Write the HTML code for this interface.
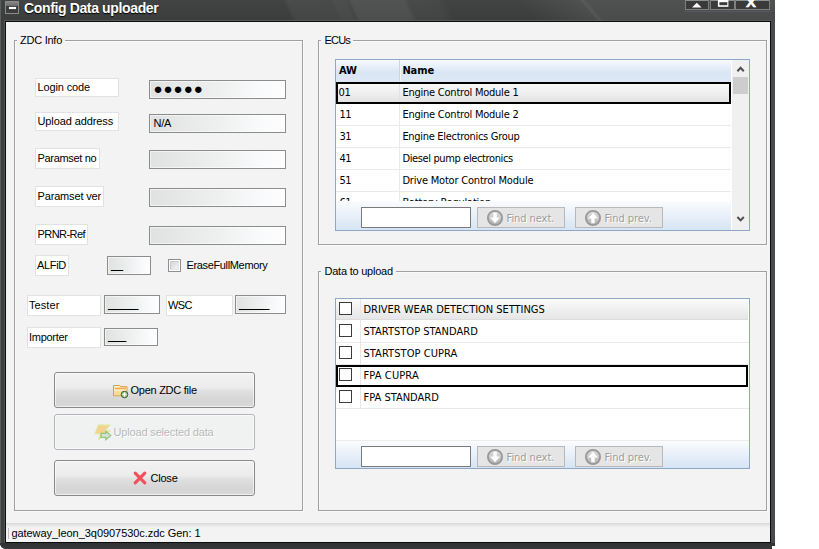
<!DOCTYPE html>
<html>
<head>
<meta charset="utf-8">
<title>Config Data uploader</title>
<style>
html,body{margin:0;padding:0;background:#fff;}
body{width:819px;height:549px;overflow:hidden;position:relative;font-family:"Liberation Sans",sans-serif;font-size:11px;color:#000;}
.abs{position:absolute;box-sizing:border-box;}
.t{line-height:12px;white-space:nowrap;}
#win{left:0;top:0;width:775px;height:549px;background:#3f4140;border-bottom-left-radius:6px;overflow:hidden;}
#titlebar{left:0;top:0;width:775px;height:21px;background:linear-gradient(#424443,#3b3d3c);overflow:hidden;}
#sheen{left:0;top:0;width:800px;height:21px;transform-origin:0 0;transform:skewX(24deg);background:linear-gradient(90deg,
 rgba(255,255,255,0) 283px, rgba(255,255,255,0.045) 287px, rgba(255,255,255,0.04) 330px, rgba(255,255,255,0.06) 334px, rgba(255,255,255,0.06) 345px, rgba(255,255,255,0.03) 347px, rgba(255,255,255,0.085) 351px, rgba(255,255,255,0.085) 403px, rgba(255,255,255,0.04) 408px, rgba(255,255,255,0.03) 436px, rgba(255,255,255,0.0) 446px, rgba(255,255,255,0.0) 800px);}
#sheen2{left:0;top:0;width:800px;height:21px;transform-origin:0 0;transform:skewX(41deg);background:linear-gradient(90deg,
 rgba(255,255,255,0.0) 515px, rgba(255,255,255,0.07) 579px, rgba(255,255,255,0.13) 582px, rgba(255,255,255,0.075) 586px, rgba(255,255,255,0.075) 800px);}
#title{left:24px;top:-1px;letter-spacing:-0.36px;font-weight:bold;font-size:14px;color:#fff;line-height:18px;white-space:nowrap;text-shadow:0 1px 1px #000;}
#sysicon{left:5px;top:1px;width:14px;height:13px;border:1px solid #8a8a8a;background:linear-gradient(#858585,#6e6e6e 32%,#3a3a3a 34%,#3e3e3e);}
#sysicon i{position:absolute;left:3px;top:5px;width:7px;height:2px;background:#fff;box-shadow:0 0 1px #ccd;}
.tbtn{top:-2px;height:12px;border:1px solid #7e807f;background:linear-gradient(#8b918b 0,#8b918b 2px,#3a3a3a 2px,#3a3a3a);}
#client{left:6px;top:22px;width:764px;height:520px;background:#f3f3f3;}
.grp{border:1px solid #a0a0a0;box-shadow:1px 1px 0 #fafafa, inset 1px 1px 0 #fafafa;}
.lbl{background:#fff;border:1px solid #e2e2e2;}
.inp{border:1px solid #8c8c8c;background:linear-gradient(90deg,#e0e1e1,#eeefef 50%,#fafbfc 85%,#fdfdfd);box-shadow:inset 0 0 0 1px rgba(255,255,255,0.55);}
.btn{border:1px solid #898989;border-radius:3px;background:linear-gradient(#f2f2f2,#ececec 42%,#dedede 56%,#d5d5d5 82%,#d9d9d9);box-shadow:inset 0 0 0 1px rgba(255,255,255,0.6);}
.tah{font-family:"DejaVu Sans Condensed","DejaVu Sans","Liberation Sans",sans-serif;font-size:11px;}
.grid{border:1px solid #8ea6c4;background:#fff;overflow:hidden;}
.row{left:0;height:22px;border-bottom:1px solid #ececec;}
.findbar{background:linear-gradient(#fbfcfe,#d6e4f4);}
.fbox{border:1px solid #7a7a7a;background:#fff;}
.fbtn{border:1px solid #b8b8b8;background:#e5e5e5;color:#a9a9a9;text-shadow:1px 1px 0 #fff;}
.cb{width:13px;height:13px;border:1px solid #3c3c3c;background:#fff;}
</style>
</head>
<body>
<div id="win" class="abs">
  <div id="titlebar" class="abs"><div id="sheen" class="abs"></div><div id="sheen2" class="abs"></div></div>
  <div class="abs" style="left:0;top:0;width:1px;height:552px;background:#59605c;"></div>
  <div id="sysicon" class="abs"><i></i></div>
  <div id="title" class="abs">Config Data uploader</div>
  <div class="abs tbtn" style="left:685px;width:24px;"></div>
  <div class="abs tbtn" style="left:710px;width:25px;"></div>
  <div class="abs tbtn" style="left:735px;width:35px;"></div>
  <svg class="abs" style="left:685px;top:0;" width="86" height="12" viewBox="0 0 86 12">
    <path d="M7 7.4 L11.8 2.8 L16.6 7.4 Z" fill="#fff"/>
    <rect x="32.9" y="-2" width="10.5" height="8.8" fill="#fff"/>
    <rect x="34.4" y="2.2" width="7.9" height="3" fill="#3a3a3a"/>
    <rect x="0" y="11" width="86" height="1" fill="#6a7088" opacity="0.35"/>
  </svg>
  <div class="abs" style="left:746.2px;top:-4px;font-weight:bold;font-size:13px;line-height:13px;color:#fff;-webkit-text-stroke:0.5px #fff;transform-origin:0 0;transform:scaleX(1.14);">X</div>
  <div class="abs" style="left:771px;top:12px;width:4px;height:540px;background:#484a4b;"></div>
  <div class="abs" style="left:4px;top:20px;width:767px;height:1px;background:#555957;"></div>
  <div class="abs" style="left:4px;top:20px;width:1px;height:524px;background:#4f5351;"></div>
  <div class="abs" style="left:5px;top:21px;width:766px;height:522px;background:#0c0c0c;"></div>
  <div id="client" class="abs"></div>
  <div class="abs" style="left:0;top:543px;width:775px;height:9px;background:linear-gradient(#2f3132,#3a3c3d);"></div>
</div>
<div class="abs" style="left:772px;top:546px;width:6px;height:6px;background:#fff;transform:rotate(0deg);"></div>
<div class="abs grp" style="left:14px;top:40px;width:289px;height:471px;"></div>
<div class="abs" style="left:17px;top:34px;width:48px;height:14px;background:#f3f3f3;"></div>
<div class="abs t " style="left:20px;top:34px;letter-spacing:-0.25px;">ZDC Info</div>
<div class="abs lbl" style="left:35px;top:78px;width:84px;height:19px;"></div>
<div class="abs t " style="left:37.5px;top:81px;letter-spacing:-0.13px;">Login code</div>
<div class="abs inp" style="left:149px;top:80px;width:137px;height:19px;"></div>
<div class="abs t" style="left:153.5px;top:79px;line-height:19px;font-size:15px;letter-spacing:1px;">●●●●●</div>
<div class="abs lbl" style="left:35px;top:112px;width:84px;height:19px;"></div>
<div class="abs t " style="left:37.5px;top:115px;letter-spacing:-0.10px;">Upload address</div>
<div class="abs inp" style="left:149px;top:114px;width:137px;height:19px;"></div>
<div class="abs t " style="left:153.5px;top:117px;letter-spacing:-0.23px;">N/A</div>
<div class="abs lbl" style="left:35px;top:148px;width:65px;height:21px;"></div>
<div class="abs t " style="left:37.5px;top:152px;letter-spacing:-0.33px;">Paramset no</div>
<div class="abs inp" style="left:149px;top:150px;width:137px;height:19px;"></div>
<div class="abs lbl" style="left:35px;top:186px;width:69px;height:21px;"></div>
<div class="abs t " style="left:37.5px;top:190px;letter-spacing:-0.16px;">Paramset ver</div>
<div class="abs inp" style="left:149px;top:188px;width:137px;height:19px;"></div>
<div class="abs lbl" style="left:35px;top:224px;width:53px;height:21px;"></div>
<div class="abs t " style="left:37.5px;top:228px;letter-spacing:-0.55px;">PRNR-Ref</div>
<div class="abs inp" style="left:149px;top:226px;width:137px;height:19px;"></div>
<div class="abs lbl" style="left:35px;top:255px;width:34px;height:21px;"></div>
<div class="abs t " style="left:37px;top:259px;letter-spacing:-0.32px;">ALFiD</div>
<div class="abs inp" style="left:107px;top:256px;width:44px;height:19px;"></div>
<div class="abs t " style="left:111px;top:259px;">__</div>
<div class="abs" style="left:111px;top:270px;width:12px;height:1px;background:#000;"></div>
<div class="abs" style="left:168px;top:259px;width:13px;height:13px;border:1px solid #8e8f8f;background:#fff;"></div>
<div class="abs" style="left:170px;top:261px;width:9px;height:9px;border:1px solid #c9cbd1;border-right-color:#e2e3e6;border-bottom-color:#e2e3e6;background:linear-gradient(135deg,#d6d6d6,#f4f4f4);"></div>
<div class="abs t " style="left:186.5px;top:259px;letter-spacing:-0.35px;">EraseFullMemory</div>
<div class="abs lbl" style="left:27px;top:295px;width:74px;height:21px;"></div>
<div class="abs t " style="left:29px;top:299px;letter-spacing:0.08px;">Tester</div>
<div class="abs inp" style="left:104px;top:295px;width:56px;height:19px;"></div>
<div class="abs t " style="left:108px;top:298px;">_____</div>
<div class="abs" style="left:108px;top:309px;width:30px;height:1px;background:#000;"></div>
<div class="abs lbl" style="left:166px;top:295px;width:67px;height:21px;"></div>
<div class="abs t " style="left:168px;top:299px;letter-spacing:-0.60px;">WSC</div>
<div class="abs inp" style="left:235px;top:295px;width:51px;height:19px;"></div>
<div class="abs t " style="left:239px;top:298px;">_____</div>
<div class="abs" style="left:239px;top:309px;width:30px;height:1px;background:#000;"></div>
<div class="abs lbl" style="left:27px;top:327px;width:74px;height:21px;"></div>
<div class="abs t " style="left:29px;top:331px;letter-spacing:-0.28px;">Importer</div>
<div class="abs inp" style="left:104px;top:328px;width:54px;height:18px;"></div>
<div class="abs t " style="left:108px;top:330px;">___</div>
<div class="abs" style="left:108px;top:341px;width:18px;height:1px;background:#000;"></div>
<div class="abs btn" style="left:54px;top:372px;width:201px;height:36px;"></div>
<svg class="abs" style="left:112px;top:384px;" width="18" height="16" viewBox="0 0 18 16"><path d="M1.5 1.5 h6 l1 1.2 h6.5 v9 h-13.5 z" fill="#fff4d8" stroke="#e29a3c" stroke-width="1"/><rect x="2.6" y="3.6" width="11.6" height="1.7" fill="#f4ad48"/><rect x="2.2" y="6.6" width="12.2" height="4.6" fill="#fbdc98"/><circle cx="12.5" cy="10.5" r="3.3" fill="#94c476" stroke="#4a5c48" stroke-width="1"/><path d="M12.5 8.6 v3.8 M10.6 10.5 h3.8" stroke="#fff" stroke-width="1.3"/></svg>
<div class="abs t " style="left:130.5px;top:384px;letter-spacing:-0.26px;">Open ZDC file</div>
<div class="abs btn" style="left:54px;top:414px;width:201px;height:36px;border-color:#b4b4bc;background:#f0f1f1;"></div>
<svg class="abs" style="left:94px;top:424px;opacity:0.7" width="18" height="17" viewBox="0 0 18 17"><path d="M4.5 1.2 L15.5 1.2 L11 7 L15.5 7 L4.5 15.5 L7.2 9.6 L1.2 9.6 Z" fill="#f7c566" stroke="#dde072" stroke-width="1.2"/><path d="M7 9.4 h4.8 v-2.2 l5 4.2 l-5 4.2 v-2.2 h-4.8 z" fill="#cfd8c8" stroke="#6fb44e" stroke-width="1.2"/></svg>
<div class="abs t " style="left:113.6px;top:426px;letter-spacing:-0.17px;color:#b9b9b9;text-shadow:1px 1px 0 #fff;">Upload selected data</div>
<div class="abs btn" style="left:54px;top:460px;width:201px;height:36px;"></div>
<svg class="abs" style="left:133px;top:471px;" width="14" height="14" viewBox="0 0 14 14"><path d="M2.2 2.2 L11.8 11.8 M11.8 2.2 L2.2 11.8" stroke="#f24f5a" stroke-width="3.1" stroke-linecap="round"/></svg>
<div class="abs t " style="left:150.5px;top:471.5px;letter-spacing:-0.22px;">Close</div>
<div class="abs grp" style="left:318px;top:40px;width:449px;height:205px;"></div>
<div class="abs" style="left:321px;top:34px;width:32px;height:14px;background:#f3f3f3;"></div>
<div class="abs t " style="left:324.5px;top:34px;letter-spacing:-0.80px;">ECUs</div>
<!-- ECU grid -->
<div class="abs" style="left:335px;top:59px;width:415px;height:172px;border:1px solid #8fa7c6;background:#fff;"></div>
<div class="abs" style="left:336px;top:60px;width:395px;height:22px;background:linear-gradient(#f7f9fd,#e3ecf8 40%,#dbe6f4 55%,#dde8f5);"></div>
<div class="abs" style="left:399px;top:60px;width:1px;height:21px;background:#c9d4e3;"></div>
<div class="abs" style="left:400px;top:60px;width:1px;height:21px;background:#f4f8fd;"></div>
<div class="abs t tah" style="left:339px;top:64px;line-height:13px;letter-spacing:-0.15px;font-weight:bold;">AW</div>
<div class="abs t tah" style="left:402.4px;top:64px;line-height:13px;letter-spacing:-0.05px;font-weight:bold;">Name</div>
<div class="abs" style="left:336px;top:125px;width:395px;height:1px;background:#ebe9e9;"></div>
<div class="abs" style="left:336px;top:147px;width:395px;height:1px;background:#ebe9e9;"></div>
<div class="abs" style="left:336px;top:169px;width:395px;height:1px;background:#ebe9e9;"></div>
<div class="abs" style="left:336px;top:191px;width:395px;height:1px;background:#ebe9e9;"></div>
<div class="abs" style="left:399px;top:104px;width:1px;height:97px;background:#ebe9e9;"></div>
<div class="abs" style="left:336px;top:82px;width:395px;height:22px;border:2px solid #000;background:linear-gradient(#f8f8f8,#efefef 50%,#e2e2e2);"></div>
<div class="abs" style="left:399px;top:84px;width:1px;height:18px;background:#e2e2e2;"></div>
<div class="abs t tah" style="left:338.5px;top:86px;line-height:13px;letter-spacing:-0.40px;">01</div>
<div class="abs t tah" style="left:402.4px;top:86px;line-height:13px;letter-spacing:-0.23px;">Engine Control Module 1</div>
<div class="abs t tah" style="left:339.4px;top:108px;line-height:13px;letter-spacing:-0.40px;">11</div>
<div class="abs t tah" style="left:402.4px;top:108px;line-height:13px;letter-spacing:-0.23px;">Engine Control Module 2</div>
<div class="abs t tah" style="left:339.4px;top:130px;line-height:13px;letter-spacing:-0.40px;">31</div>
<div class="abs t tah" style="left:402.4px;top:130px;line-height:13px;letter-spacing:-0.30px;">Engine Electronics Group</div>
<div class="abs t tah" style="left:339.4px;top:152px;line-height:13px;letter-spacing:-0.40px;">41</div>
<div class="abs t tah" style="left:402.4px;top:152px;line-height:13px;letter-spacing:-0.37px;">Diesel pump electronics</div>
<div class="abs t tah" style="left:339.4px;top:174px;line-height:13px;letter-spacing:-0.40px;">51</div>
<div class="abs t tah" style="left:402.4px;top:174px;line-height:13px;letter-spacing:-0.20px;">Drive Motor Control Module</div>
<div class="abs t tah" style="left:339.4px;top:196px;line-height:13px;letter-spacing:-0.40px;">61</div>
<div class="abs t tah" style="left:402.4px;top:196px;line-height:13px;letter-spacing:-0.22px;">Battery Regulation</div>
<div class="abs findbar" style="left:336px;top:201px;width:396px;height:29px;"></div>
<div class="abs" style="left:731px;top:60px;width:1px;height:170px;background:#fff;"></div>
<div class="abs" style="left:732px;top:60px;width:17px;height:170px;background:#f0f0f0;"></div>
<div class="abs" style="left:733px;top:77px;width:15px;height:17px;background:#cdcdcd;"></div>
<svg class="abs" style="left:732px;top:60px;" width="17" height="170" viewBox="0 0 17 170"><path d="M5.4 11.2 L8.6 7.8 L11.8 11.2" fill="none" stroke="#4e4e4e" stroke-width="2"/><path d="M5.4 157 L8.6 160.4 L11.8 157" fill="none" stroke="#4e4e4e" stroke-width="2"/></svg>
<div class="abs fbox" style="left:361px;top:207px;width:110px;height:21px;"></div>
<div class="abs fbtn" style="left:477px;top:207px;width:88px;height:21px;"></div>
<svg class="abs" style="left:487px;top:210px;" width="16" height="16" viewBox="0 0 16 16"><defs><linearGradient id="g477207" x1="0" y1="0" x2="0" y2="1"><stop offset="0" stop-color="#dedede"/><stop offset="1" stop-color="#b2b2b2"/></linearGradient></defs><circle cx="8" cy="8" r="7.1" fill="url(#g477207)" stroke="#989898" stroke-width="1.8"/><path d="M6.3 2.8 V7.6 H3 L8 13.2 L13 7.6 H9.7 V2.8 Z" fill="#fff"/></svg>
<div class="abs t tah" style="left:506.6px;top:212px;line-height:13px;letter-spacing:-0.07px;color:#9e9e9e;text-shadow:1px 1px 0 #fff;">Find next.</div>
<div class="abs fbtn" style="left:575px;top:207px;width:88px;height:21px;"></div>
<svg class="abs" style="left:585px;top:210px;" width="16" height="16" viewBox="0 0 16 16"><defs><linearGradient id="g575207" x1="0" y1="0" x2="0" y2="1"><stop offset="0" stop-color="#dedede"/><stop offset="1" stop-color="#b2b2b2"/></linearGradient></defs><circle cx="8" cy="8" r="7.1" fill="url(#g575207)" stroke="#989898" stroke-width="1.8"/><path d="M6.3 13.2 V8.4 H3 L8 2.8 L13 8.4 H9.7 V13.2 Z" fill="#fff"/></svg>
<div class="abs t tah" style="left:604.6px;top:212px;line-height:13px;letter-spacing:-0.04px;color:#9e9e9e;text-shadow:1px 1px 0 #fff;">Find prev.</div>

<div class="abs grp" style="left:318px;top:271px;width:449px;height:240px;"></div>
<div class="abs" style="left:321px;top:265px;width:75px;height:14px;background:#f3f3f3;"></div>
<div class="abs t " style="left:324.5px;top:265px;letter-spacing:-0.23px;">Data to upload</div>
<!-- Data grid -->
<div class="abs" style="left:335px;top:298px;width:415px;height:171px;border:1px solid #8fa7c6;background:#fff;"></div>
<div class="abs" style="left:336px;top:299px;width:412px;height:21px;background:linear-gradient(#fbfbfb,#f0f0f0 50%,#e6e6e6);border-bottom:1px solid #dcdcdc;"></div>
<div class="abs" style="left:336px;top:342px;width:413px;height:1px;background:#ebe9e9;"></div>
<div class="abs" style="left:336px;top:364px;width:413px;height:1px;background:#ebe9e9;"></div>
<div class="abs" style="left:336px;top:408px;width:413px;height:1px;background:#ebe9e9;"></div>
<div class="abs" style="left:360px;top:299px;width:1px;height:109px;background:#e6e6e6;"></div>
<div class="abs" style="left:336px;top:365px;width:412px;height:22px;border:2px solid #000;background:#fff;"></div>
<div class="abs" style="left:360px;top:367px;width:1px;height:18px;background:#e6e6e6;"></div>
<div class="abs cb" style="left:339px;top:302px;"></div>
<div class="abs t tah" style="left:363.5px;top:303px;line-height:13px;letter-spacing:-0.04px;">DRIVER WEAR DETECTION SETTINGS</div>
<div class="abs cb" style="left:339px;top:324px;"></div>
<div class="abs t tah" style="left:363.5px;top:325px;line-height:13px;letter-spacing:0.02px;">STARTSTOP STANDARD</div>
<div class="abs cb" style="left:339px;top:346px;"></div>
<div class="abs t tah" style="left:363.5px;top:347px;line-height:13px;letter-spacing:0.07px;">STARTSTOP CUPRA</div>
<div class="abs cb" style="left:339px;top:368px;"></div>
<div class="abs t tah" style="left:363.5px;top:369px;line-height:13px;letter-spacing:0.12px;">FPA CUPRA</div>
<div class="abs cb" style="left:339px;top:390px;"></div>
<div class="abs t tah" style="left:363.5px;top:391px;line-height:13px;letter-spacing:0.01px;">FPA STANDARD</div>
<div class="abs findbar" style="left:336px;top:440px;width:413px;height:28px;border-top:1px solid #ececec;"></div>
<div class="abs fbox" style="left:361px;top:446px;width:110px;height:21px;"></div>
<div class="abs fbtn" style="left:477px;top:446px;width:88px;height:21px;"></div>
<svg class="abs" style="left:487px;top:449px;" width="16" height="16" viewBox="0 0 16 16"><defs><linearGradient id="g477446" x1="0" y1="0" x2="0" y2="1"><stop offset="0" stop-color="#dedede"/><stop offset="1" stop-color="#b2b2b2"/></linearGradient></defs><circle cx="8" cy="8" r="7.1" fill="url(#g477446)" stroke="#989898" stroke-width="1.8"/><path d="M6.3 2.8 V7.6 H3 L8 13.2 L13 7.6 H9.7 V2.8 Z" fill="#fff"/></svg>
<div class="abs t tah" style="left:506.6px;top:451px;line-height:13px;letter-spacing:-0.07px;color:#9e9e9e;text-shadow:1px 1px 0 #fff;">Find next.</div>
<div class="abs fbtn" style="left:575px;top:446px;width:88px;height:21px;"></div>
<svg class="abs" style="left:585px;top:449px;" width="16" height="16" viewBox="0 0 16 16"><defs><linearGradient id="g575446" x1="0" y1="0" x2="0" y2="1"><stop offset="0" stop-color="#dedede"/><stop offset="1" stop-color="#b2b2b2"/></linearGradient></defs><circle cx="8" cy="8" r="7.1" fill="url(#g575446)" stroke="#989898" stroke-width="1.8"/><path d="M6.3 13.2 V8.4 H3 L8 2.8 L13 8.4 H9.7 V13.2 Z" fill="#fff"/></svg>
<div class="abs t tah" style="left:604.6px;top:451px;line-height:13px;letter-spacing:-0.04px;color:#9e9e9e;text-shadow:1px 1px 0 #fff;">Find prev.</div>

<div class="abs" style="left:6px;top:523px;width:764px;height:5px;background:linear-gradient(#d9d9d9,#e2e2e2 30%,#ebebeb 60%,#f3f3f3);"></div>
<div class="abs" style="left:8px;top:528px;width:1px;height:11px;background:#bcbcc2;"></div>
<div class="abs t " style="left:11.4px;top:527px;letter-spacing:-0.05px;">gateway_leon_3q0907530c.zdc Gen: 1</div>
</body>
</html>
